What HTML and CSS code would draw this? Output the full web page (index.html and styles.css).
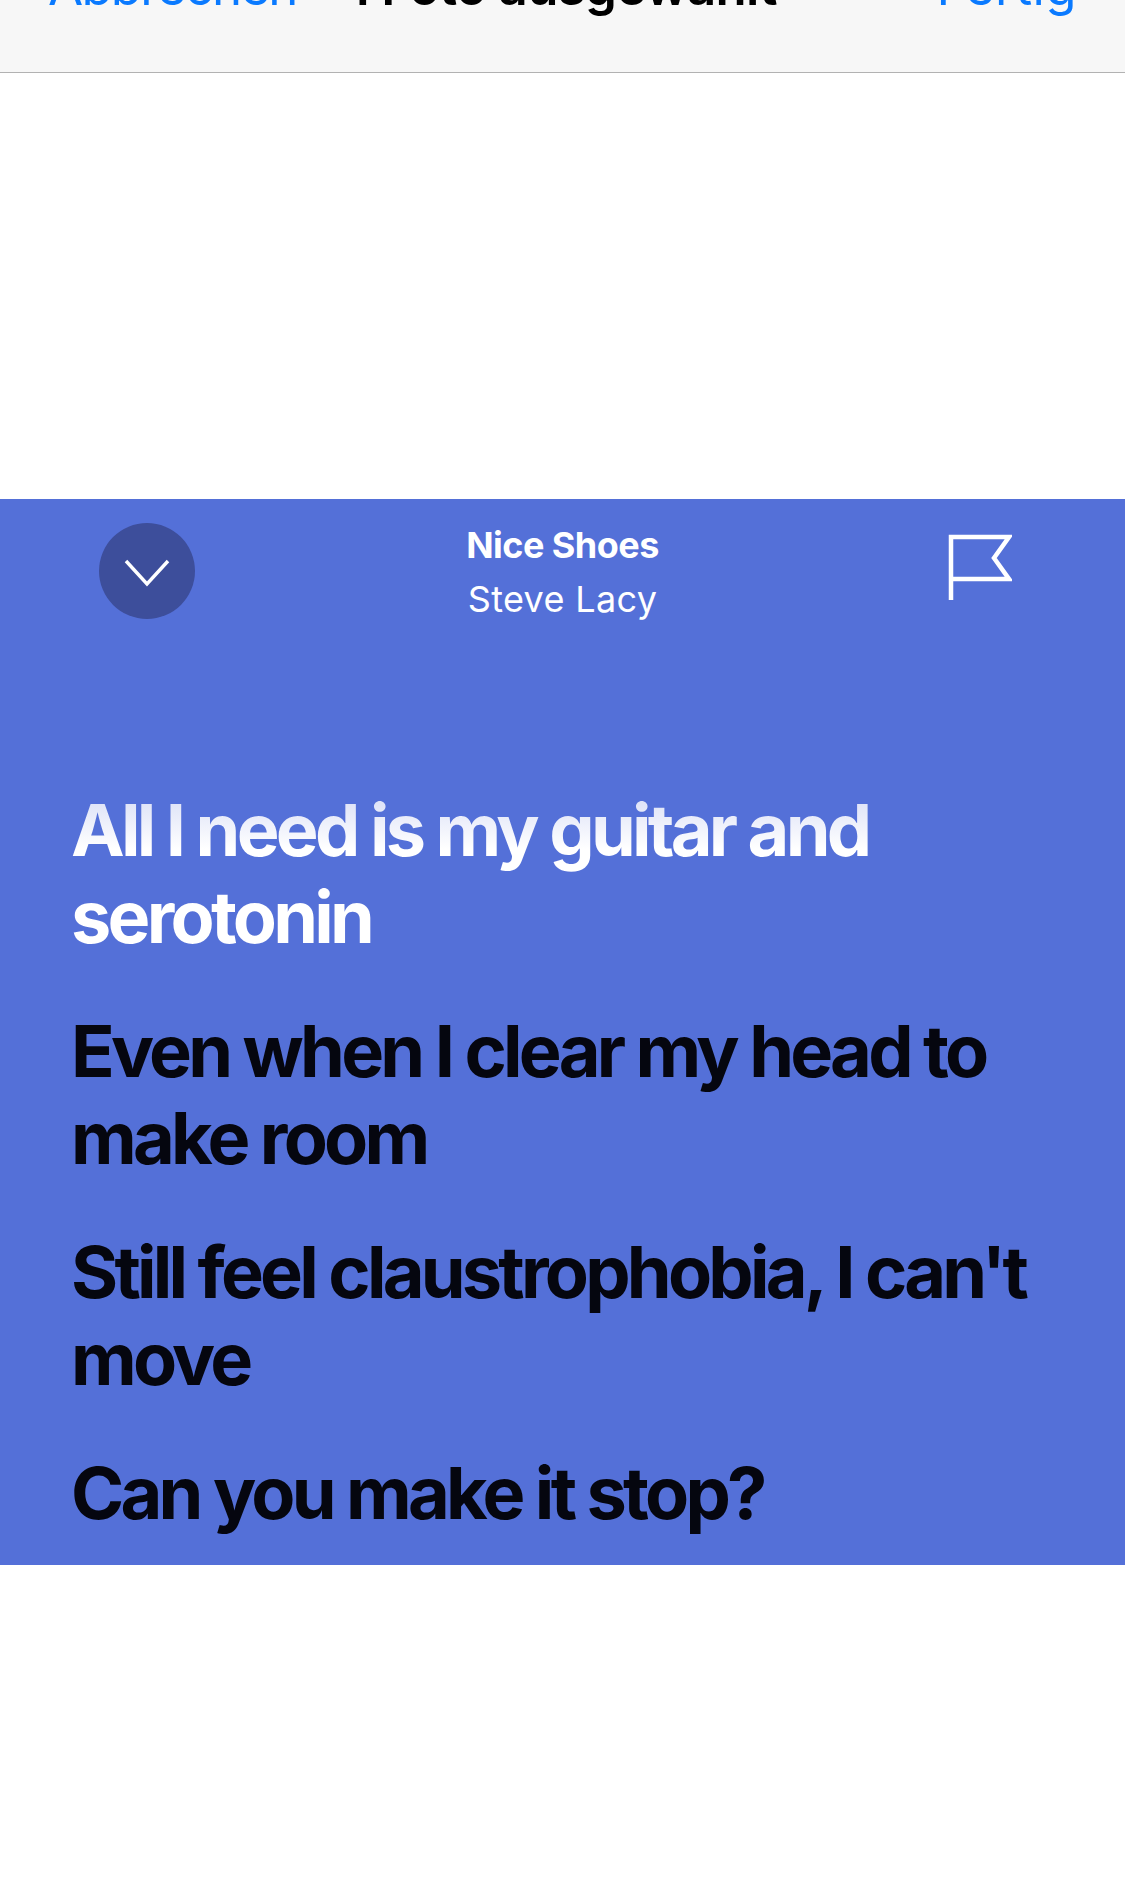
FILE: index.html
```html
<!DOCTYPE html>
<html lang="de">
<head>
<meta charset="utf-8">
<title>Nice Shoes</title>
<link rel="stylesheet" href="styles.css">
</head>
<body>
<header class="nav">
  <div class="nav-row">
    <span class="nav-action nav-cancel">Abbrechen</span>
    <span class="nav-title">1 Foto ausgewählt</span>
    <span class="nav-action nav-done">Fertig</span>
  </div>
</header>
<div class="spacer-top"></div>
<section class="card">
  <div class="card-head">
    <div class="close">
      <svg class="close-icon" viewBox="0 0 46 28" width="46" height="28" aria-hidden="true"><path d="M2 2 L23 25 L44 2" fill="none" stroke="#fff" stroke-width="3.4"/></svg>
    </div>
    <div class="track">
      <div class="track-name">Nice Shoes</div>
      <div class="track-artist">Steve Lacy</div>
    </div>
    <svg class="flag" viewBox="0 0 64 66" width="64" height="66" aria-hidden="true"><path d="M3 66 V3 H61 L46 24 L61 45 H3" fill="none" stroke="#fff" stroke-width="4.5"/></svg>
  </div>
  <div class="lyrics">
    <p class="line line-active">All I need is my guitar and serotonin</p>
    <p class="line">Even when I clear my head to make room</p>
    <p class="line">Still feel claustrophobia, I can't move</p>
    <p class="line">Can you make it stop?</p>
  </div>
</section>
</body>
</html>
```

FILE: styles.css
```css
* { box-sizing: border-box; }
html, body { margin: 0; padding: 0; background: #fff; }
body { width: 1125px; height: 1884px; overflow: hidden; font-family: Inter, "Liberation Sans", sans-serif; }

.nav { height: 73px; background: #f7f7f7; border-bottom: 1px solid #b2b2b2; overflow: hidden; }
.nav-row { display: grid; grid-template-columns: 1fr auto 1fr; align-items: baseline; height: 60px; margin-top: -43px; padding: 0 48px; font-size: 51px; line-height: 60px; }
.nav-action { color: #0a7aff; font-weight: 400; }
.nav-cancel { letter-spacing: -1.8px; }
.nav-done { text-align: right; letter-spacing: 0.4px; }
.nav-title { color: #000; font-weight: 600; letter-spacing: -0.7px; }

.spacer-top { height: 426px; }

.card { height: 1066px; background: #5470d8; overflow: hidden; padding: 23px 113px 0 99px; }
.card-head { display: grid; grid-template-columns: 1fr auto 1fr; align-items: start; }
.close { width: 96px; height: 96px; margin-top: 1px; border-radius: 50%; background: #3d4e9b; display: flex; align-items: center; justify-content: center; }
.close-icon { width: 46px; height: 28px; margin-top: 4px; }
.track { text-align: center; color: #fff; margin-left: 14px; }
.track-name { font-size: 36px; line-height: 46px; font-weight: 700; letter-spacing: -0.55px; }
.track-artist { font-size: 36px; line-height: 46px; margin-top: 8px; font-weight: 400; letter-spacing: 0.35px; }
.flag { margin-top: 12px; justify-self: end; }

.lyrics { margin: 165px 0 0 -28px; display: flex; flex-direction: column; gap: 48px; }
.line { margin: 0; width: 1000px; font-size: 72px; line-height: 86.5px; font-weight: 700; letter-spacing: -3.75px; color: #05060f; }
.line-active { background: linear-gradient(#dde2f7 12px, #fff 62px); -webkit-background-clip: text; background-clip: text; color: transparent; }
```
